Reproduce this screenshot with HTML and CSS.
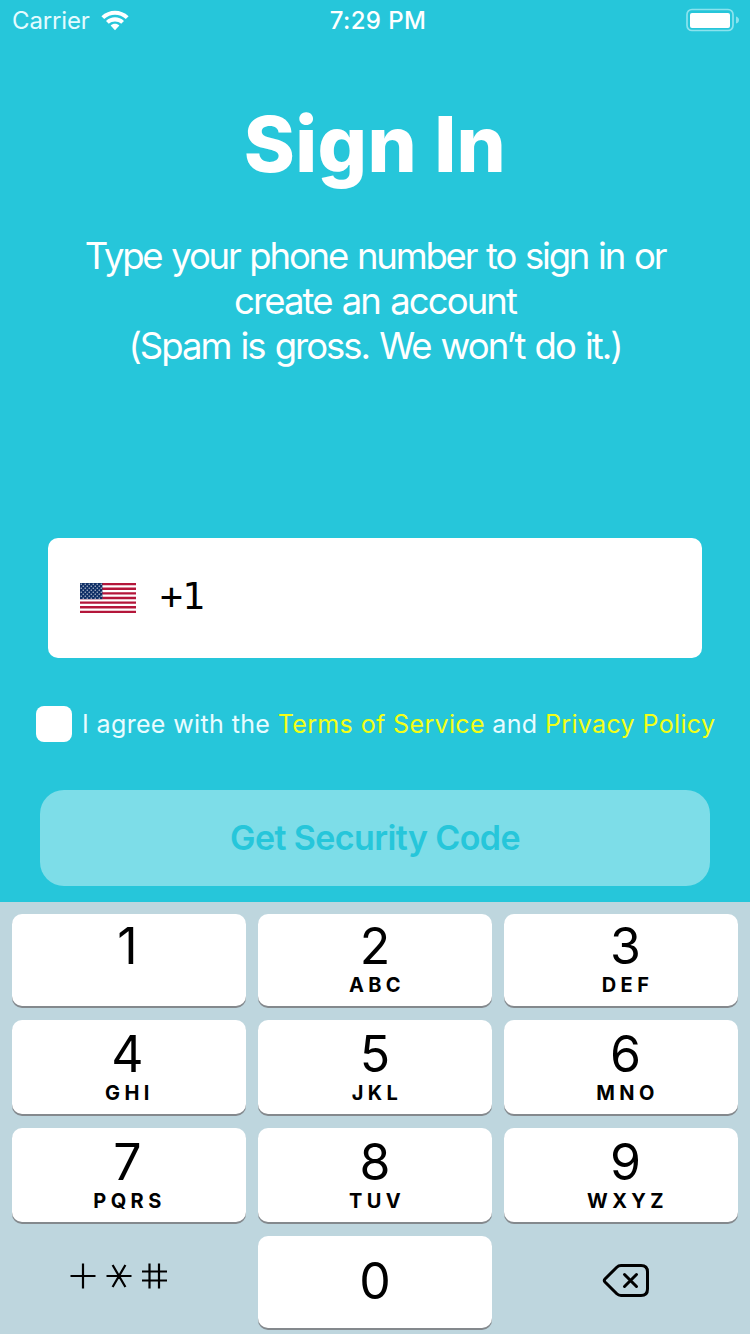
FILE: index.html
```
<!DOCTYPE html>
<html lang="en">
<head>
<meta charset="utf-8">
<title>Sign In</title>
<link rel="stylesheet" href="styles.css">
</head>
<body>
<div class="screen">
  <header class="status">
    <div class="status-left">
      <span class="carrier">Carrier</span>
      <svg class="wifi" width="28" height="21" viewBox="0 0 28 21">
        <path d="M0.4 6.3C8 -1.1 20 -1.1 27.6 6.3L24.8 9.1C18.8 3.4 9.2 3.4 3.2 9.1Z"/>
        <path d="M5 10.9C10 6.1 18 6.1 23 10.9L20.2 13.7C16.8 10.6 11.2 10.6 7.8 13.7Z"/>
        <path d="M9.6 15.4C12 13.2 16 13.2 18.4 15.4L14 20.3Z"/>
      </svg>
    </div>
    <span class="time">7:29 PM</span>
    <div class="status-right">
      <svg width="53" height="24" viewBox="0 0 53 24">
        <rect x="1" y="1.5" width="46" height="21" rx="5" class="battery-shell"/>
        <rect x="4" y="5" width="40" height="15" rx="2" class="battery-fill"/>
        <path d="M50 8.500Q53 9.500 53 12T50 15.500Z" class="battery-tip"/>
      </svg>
    </div>
  </header>
  <main class="content">
    <h1 class="title">Sign In</h1>
    <p class="subtitle"><span class="line-a">Type your phone number to sign in or</span><br><span class="line-b">create an account</span><br><span class="line-c">(Spam is gross. We won’t do it.)</span></p>
    <div class="phone">
      <svg class="flag" width="56" height="30" viewBox="0 0 56 30">
        <defs>
          <pattern id="stars" width="4" height="4" patternUnits="userSpaceOnUse">
            <circle cx="1.2" cy="1.2" r=".6" fill="#fff"/>
            <circle cx="3.2" cy="3.2" r=".6" fill="#fff"/>
          </pattern>
        </defs>
        <rect width="56" height="30" fill="#fff"/>
        <path d="M0 1.15H56M0 5.77H56M0 10.38H56M0 15H56M0 19.62H56M0 24.23H56M0 28.85H56" stroke="#b4163a" stroke-width="2.31"/>
        <rect width="22.4" height="16.15" fill="#0f2f66"/>
        <rect width="22.4" height="16.15" fill="url(#stars)"/>
      </svg>
      <span class="prefix">+1</span>
    </div>
    <div class="agree">
      <span class="checkbox"></span>
      <span class="agree-text">I agree with the <a class="link">Terms of Service</a> and <a class="link">Privacy Policy</a></span>
    </div>
    <button class="submit">Get Security Code</button>
  </main>
  <div class="keypad">
    <div class="key first left"><span class="digit">1</span></div>
    <div class="key first"><span class="digit">2</span><span class="letters">ABC</span></div>
    <div class="key first right"><span class="digit">3</span><span class="letters">DEF</span></div>
    <div class="key left"><span class="digit">4</span><span class="letters">GHI</span></div>
    <div class="key"><span class="digit">5</span><span class="letters">JKL</span></div>
    <div class="key right"><span class="digit">6</span><span class="letters">MNO</span></div>
    <div class="key left"><span class="digit">7</span><span class="letters">PQRS</span></div>
    <div class="key"><span class="digit">8</span><span class="letters">TUV</span></div>
    <div class="key right"><span class="digit">9</span><span class="letters">WXYZ</span></div>
    <div class="plain symbols">
      <svg width="98" height="26" viewBox="0 0 98 26">
        <path d="M0.5 13H25.5M13 0.5V25.5M36.5 13H61.5M42.6 2L55.4 24M55.4 2L42.6 24M72 8.5H97M72 17.5H97M79.5 0.5V25.5M89 0.5V25.5"/>
      </svg>
    </div>
    <div class="key zero"><span class="digit">0</span></div>
    <div class="plain erase">
      <svg width="48" height="36" viewBox="0 0 48 36">
        <path d="M19 2.5H39Q45.5 2.5 45.5 9V26Q45.5 32.5 39 32.5H19Q16.5 32.5 14.8 30.8L3 19Q1.6 17.5 3 16L14.8 4.2Q16.5 2.5 19 2.5Z"/>
        <path d="M22.5 11.5L34.5 23.5M34.5 11.5L22.5 23.5"/>
      </svg>
    </div>
  </div>
</div>
</body>
</html>
```
FILE: styles.css
```
* { box-sizing: border-box; }
body { margin: 0; font-family: Inter, "Liberation Sans", sans-serif; }
.screen { width: 750px; height: 1334px; display: flex; flex-direction: column; background: #26c6da; overflow: hidden; color: #fff; }
.status { height: 40px; flex: none; display: grid; grid-template-columns: 1fr auto 1fr; padding: 0 11px 0 12px; align-items: center; font-size: 24px; line-height: 38px; }
.status-left { display: flex; align-items: center; gap: 11px; }
.carrier { letter-spacing: -0.15px; color: #e4fbff; padding-top: 2px; }
.wifi { fill: #fff; }
.time { font-weight: 500; letter-spacing: 0.4px; padding: 2px 0 0 5px; }
.status-right { display: flex; justify-content: flex-end; }
.battery-shell { fill: none; stroke: #8be3ee; stroke-width: 1.7; }
.battery-fill { fill: #fff; }
.battery-tip { fill: #8be3ee; }
.content { height: 862px; flex: none; display: flex; flex-direction: column; }
.title { margin: 56px 0 0; font-size: 77.5px; line-height: 96px; font-weight: 800; text-align: center; letter-spacing: 0.3px; }
.subtitle { margin: 42px 0 0; font-size: 36.5px; line-height: 45px; text-align: center; word-spacing: 1.8px; }
.line-a { letter-spacing: -2.2px; }
.line-b { letter-spacing: -1.9px; }
.line-c { letter-spacing: -2px; }
.phone { margin: 169px 48px 0; height: 120px; flex: none; border-radius: 10px; background: #fff; display: flex; align-items: center; padding-left: 32px; gap: 24px; }
.prefix { font: 38px/44px "DejaVu Sans Mono", monospace; color: #000; letter-spacing: -1px; padding-bottom: 4px; }
.agree { margin: 48px 0 0 36px; height: 36px; display: flex; align-items: center; gap: 10px; white-space: nowrap; }
.checkbox { width: 36px; height: 36px; border-radius: 8px; background: #fff; flex: none; }
.agree-text { font-size: 25px; letter-spacing: 0.33px; word-spacing: 0.2px; color: #e9fcff; }
.link { color: #f3ff16; }
.submit { margin: 48px 40px 0; padding-bottom: 2px; height: 96px; flex: none; border: 0; border-radius: 24px; background: #7ddde8; color: #26c6da; font: 600 34px Inter, sans-serif; letter-spacing: -0.6px; }
.keypad { flex: 1; background: #bed6de; padding: 12px 12px 0; display: grid; grid-template-columns: repeat(3, 234px); grid-template-rows: 92px 94px 94px 92px; gap: 14px 12px; color: #000; }
.key { display: flex; flex-direction: column; align-items: center; padding-top: 4px; border-radius: 10px; background: #fff; box-shadow: 0 2px 0 #84898d; }
.first { padding-top: 2px; }
.left { padding-right: 3px; }
.right { padding-left: 9px; }
.digit { font-size: 50px; line-height: 60px; }
.letters { font-size: 20px; line-height: 24px; margin-top: -3px; font-weight: 700; letter-spacing: 4.4px; padding-left: 4px; }
.zero { padding-top: 15px; }
.plain { display: flex; }
.symbols { padding: 27px 0 0 58px; }
.erase { padding: 27px 0 0 98px; }
.plain svg { fill: none; stroke: #000; stroke-width: 2.2; }
.erase svg { stroke-width: 3; stroke-linecap: round; }
```
